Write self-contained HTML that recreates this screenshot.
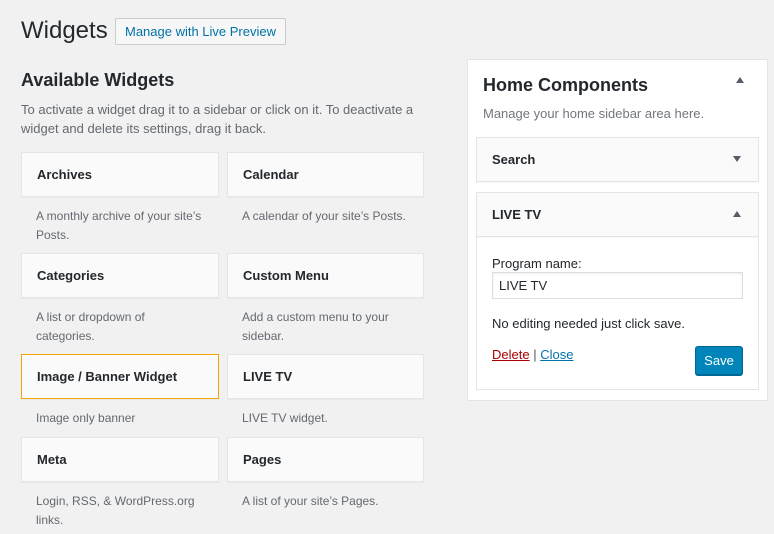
<!DOCTYPE html>
<html><head><meta charset="utf-8"><style>
*{box-sizing:border-box;margin:0;padding:0}
body{width:774px;height:534px;background:#f1f1f1;font-family:"Liberation Sans",sans-serif;color:#23282d;position:relative;overflow:hidden;font-size:13px}
.a{position:absolute;white-space:nowrap}
.box{position:absolute;background:#fafafa;border:1px solid #e5e5e5;box-shadow:0 1px 1px rgba(0,0,0,.04)}
.box span{position:absolute;left:15px;top:14px;font-size:13px;font-weight:bold;color:#23282d}
.desc{position:absolute;font-size:12px;color:#646970;line-height:19px;white-space:normal}
.tri-up,.tri-dn{position:absolute;width:0;height:0;border-left:4px solid transparent;border-right:4px solid transparent}
.tri-up{border-bottom:6px solid #555d66}
.tri-dn{border-top:6px solid #555d66}
</style></head><body>
<div class="a" style="left:21px;top:17px;font-size:24px;color:#23282d">Widgets</div>
<div class="a" style="left:115px;top:18px;width:171px;height:27px;border:1px solid #ccc;background:#f7f7f7;border-radius:2px;color:#0073aa;font-size:13px;line-height:25px;text-align:center">Manage with Live Preview</div>
<div class="a" style="left:21px;top:70px;font-size:18px;font-weight:bold;color:#23282d">Available Widgets</div>
<div class="desc" style="left:21px;top:100px;width:405px;font-size:13px;line-height:19px">To activate a widget drag it to a sidebar or click on it. To deactivate a widget and delete its settings, drag it back.</div>

<div class="box" style="left:21px;top:152px;width:198px;height:45px"><span>Archives</span></div>
<div class="desc" style="left:36px;top:207px;width:175px">A monthly archive of your site’s Posts.</div>
<div class="box" style="left:227px;top:152px;width:197px;height:45px"><span>Calendar</span></div>
<div class="desc" style="left:242px;top:207px;width:175px">A calendar of your site’s Posts.</div>

<div class="box" style="left:21px;top:253px;width:198px;height:45px"><span>Categories</span></div>
<div class="desc" style="left:36px;top:308px;width:150px">A list or dropdown of categories.</div>
<div class="box" style="left:227px;top:253px;width:197px;height:45px"><span>Custom Menu</span></div>
<div class="desc" style="left:242px;top:308px;width:160px">Add a custom menu to your sidebar.</div>

<div class="box" style="left:21px;top:354px;width:198px;height:45px;border-color:#f0a500"><span>Image / Banner Widget</span></div>
<div class="desc" style="left:36px;top:409px;width:175px">Image only banner</div>
<div class="box" style="left:227px;top:354px;width:197px;height:45px"><span>LIVE TV</span></div>
<div class="desc" style="left:242px;top:409px;width:175px">LIVE TV widget.</div>

<div class="box" style="left:21px;top:437px;width:198px;height:45px"><span>Meta</span></div>
<div class="desc" style="left:36px;top:492px;width:170px">Login, RSS, &amp; WordPress.org links.</div>
<div class="box" style="left:227px;top:437px;width:197px;height:45px"><span>Pages</span></div>
<div class="desc" style="left:242px;top:492px;width:175px">A list of your site’s Pages.</div>

<div class="a" style="left:467px;top:59px;width:301px;height:342px;background:#fff;border:1px solid #e5e5e5"></div>
<div class="a" style="left:483px;top:75px;font-size:18px;font-weight:bold;color:#23282d">Home Components</div>
<div class="tri-up" style="left:736px;top:77px"></div>
<div class="a" style="left:483px;top:106px;font-size:13px;color:#72777c">Manage your home sidebar area here.</div>

<div class="box" style="left:476px;top:137px;width:283px;height:45px"><span>Search</span></div>
<div class="tri-dn" style="left:733px;top:156px"></div>

<div class="a" style="left:476px;top:192px;width:283px;height:198px;background:#fff;border:1px solid #e5e5e5"></div>
<div class="box" style="left:476px;top:192px;width:283px;height:45px"><span>LIVE TV</span></div>
<div class="tri-up" style="left:733px;top:211px"></div>
<div class="a" style="left:492px;top:256px;font-size:13px;color:#23282d">Program name:</div>
<div class="a" style="left:492px;top:272px;width:251px;height:27px;border:1px solid #ddd;background:#fff;font-size:13px;line-height:25px;padding-left:6px;box-shadow:inset 0 1px 2px rgba(0,0,0,.07)">LIVE TV</div>
<div class="a" style="left:492px;top:316px;font-size:13px;color:#23282d">No editing needed just click save.</div>
<div class="a" style="left:492px;top:347px;font-size:13px;color:#555"><span style="color:#a00;text-decoration:underline">Delete</span> | <span style="color:#0073aa;text-decoration:underline">Close</span></div>
<div class="a" style="left:695px;top:346px;width:48px;height:29px;background:#0085ba;border:1px solid #006799;border-radius:3px;color:#fff;font-size:13px;line-height:27px;text-align:center;box-shadow:0 1px 0 #006799">Save</div>
</body></html>
